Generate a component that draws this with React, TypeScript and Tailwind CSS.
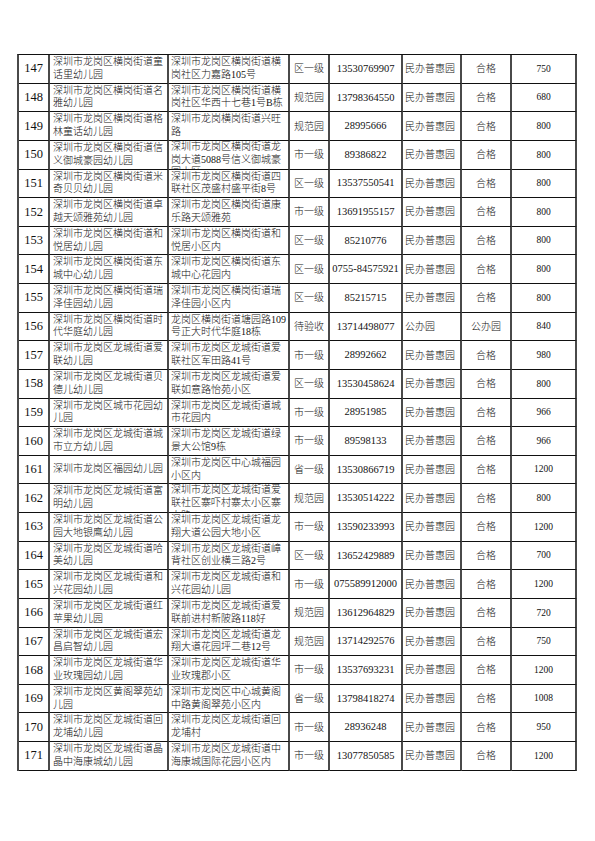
import React from "react";

type Row = {
  no: number;
  name: string;
  address: string;
  level: string;
  phone: string;
  kind: string;
  result: string;
  seats: number;
};

const PUHUI = "民办普惠园";

const rows: Row[] = [
  { no: 147, name: "深圳市龙岗区横岗街道童话里幼儿园", address: "深圳市龙岗区横岗街道横岗社区力嘉路105号", level: "区一级", phone: "13530769907", kind: PUHUI, result: "合格", seats: 750 },
  { no: 148, name: "深圳市龙岗区横岗街道名雅幼儿园", address: "深圳市龙岗区横岗街道横岗社区华西十七巷1号B栋", level: "规范园", phone: "13798364550", kind: PUHUI, result: "合格", seats: 680 },
  { no: 149, name: "深圳市龙岗区横岗街道格林童话幼儿园", address: "深圳市龙岗横岗街道兴旺路", level: "规范园", phone: "28995666", kind: PUHUI, result: "合格", seats: 800 },
  { no: 150, name: "深圳市龙岗区横岗街道信义御城豪园幼儿园", address: "深圳市龙岗区横岗街道龙岗大道5088号信义御城豪园小区", level: "市一级", phone: "89386822", kind: PUHUI, result: "合格", seats: 800 },
  { no: 151, name: "深圳市龙岗区横岗街道米奇贝贝幼儿园", address: "深圳市龙岗区横岗街道四联社区茂盛村盛平街8号", level: "区一级", phone: "13537550541", kind: PUHUI, result: "合格", seats: 800 },
  { no: 152, name: "深圳市龙岗区横岗街道卓越天颂雅苑幼儿园", address: "深圳市龙岗区横岗街道康乐路天颂雅苑", level: "市一级", phone: "13691955157", kind: PUHUI, result: "合格", seats: 800 },
  { no: 153, name: "深圳市龙岗区横岗街道和悦居幼儿园", address: "深圳市龙岗区横岗街道和悦居小区内", level: "区一级", phone: "85210776", kind: PUHUI, result: "合格", seats: 800 },
  { no: 154, name: "深圳市龙岗区横岗街道东城中心幼儿园", address: "深圳市龙岗区横岗街道东城中心花园内", level: "区一级", phone: "0755-84575921", kind: PUHUI, result: "合格", seats: 800 },
  { no: 155, name: "深圳市龙岗区横岗街道瑞泽佳园幼儿园", address: "深圳市龙岗区横岗街道瑞泽佳园小区内", level: "区一级", phone: "85215715", kind: PUHUI, result: "合格", seats: 800 },
  { no: 156, name: "深圳市龙岗区横岗街道时代华庭幼儿园", address: "龙岗区横岗街道塘园路109号正大时代华庭18栋", level: "待验收", phone: "13714498077", kind: "公办园", result: "公办园", seats: 840 },
  { no: 157, name: "深圳市龙岗区龙城街道爱联幼儿园", address: "深圳市龙岗区龙城街道爱联社区军田路41号", level: "市一级", phone: "28992662", kind: PUHUI, result: "合格", seats: 980 },
  { no: 158, name: "深圳市龙岗区龙城街道贝德儿幼儿园", address: "深圳市龙岗区龙城街道爱联如意路怡苑小区", level: "区一级", phone: "13530458624", kind: PUHUI, result: "合格", seats: 800 },
  { no: 159, name: "深圳市龙岗区城市花园幼儿园", address: "深圳市龙岗区龙城街道城市花园内", level: "市一级", phone: "28951985", kind: PUHUI, result: "合格", seats: 966 },
  { no: 160, name: "深圳市龙岗区龙城街道城市立方幼儿园", address: "深圳市龙岗区龙城街道绿景大公馆9栋", level: "市一级", phone: "89598133", kind: PUHUI, result: "合格", seats: 966 },
  { no: 161, name: "深圳市龙岗区福园幼儿园", address: "深圳市龙岗区中心城福园小区内", level: "省一级", phone: "13530866719", kind: PUHUI, result: "合格", seats: 1200 },
  { no: 162, name: "深圳市龙岗区龙城街道富明幼儿园", address: "深圳市龙岗区龙城街道爱联社区寨吓村寨太小区寨太路", level: "规范园", phone: "13530514222", kind: PUHUI, result: "合格", seats: 800 },
  { no: 163, name: "深圳市龙岗区龙城街道公园大地银鹰幼儿园", address: "深圳市龙岗区龙城街道龙翔大道公园大地小区", level: "市一级", phone: "13590233993", kind: PUHUI, result: "合格", seats: 1200 },
  { no: 164, name: "深圳市龙岗区龙城街道哈美幼儿园", address: "深圳市龙岗区龙城街道嶂背社区创业横三路2号", level: "区一级", phone: "13652429889", kind: PUHUI, result: "合格", seats: 700 },
  { no: 165, name: "深圳市龙岗区龙城街道和兴花园幼儿园", address: "深圳市龙岗区龙城街道和兴花园幼儿园", level: "市一级", phone: "075589912000", kind: PUHUI, result: "合格", seats: 1200 },
  { no: 166, name: "深圳市龙岗区龙城街道红苹果幼儿园", address: "深圳市龙岗区龙城街道爱联前进村新陂路118好", level: "规范园", phone: "13612964829", kind: PUHUI, result: "合格", seats: 720 },
  { no: 167, name: "深圳市龙岗区龙城街道宏昌启智幼儿园", address: "深圳市龙岗区龙城街道龙翔大道花园坪二巷12号", level: "规范园", phone: "13714292576", kind: PUHUI, result: "合格", seats: 750 },
  { no: 168, name: "深圳市龙岗区龙城街道华业玫瑰园幼儿园", address: "深圳市龙岗区龙城街道华业玫瑰郡小区", level: "市一级", phone: "13537693231", kind: PUHUI, result: "合格", seats: 1200 },
  { no: 169, name: "深圳市龙岗区黄阁翠苑幼儿园", address: "深圳市龙岗区中心城黄阁中路黄阁翠苑小区内", level: "省一级", phone: "13798418274", kind: PUHUI, result: "合格", seats: 1008 },
  { no: 170, name: "深圳市龙岗区龙城街道回龙埔幼儿园", address: "深圳市龙岗区龙城街道回龙埔村", level: "市一级", phone: "28936248", kind: PUHUI, result: "合格", seats: 950 },
  { no: 171, name: "深圳市龙岗区龙城街道晶晶中海康城幼儿园", address: "深圳市龙岗区龙城街道中海康城国际花园小区内", level: "市一级", phone: "13077850585", kind: PUHUI, result: "合格", seats: 1200 },
];

// shared cell frame: grey vertical rule, black horizontal rule
const cell =
  "box-border flex overflow-hidden border-r-2 border-r-[#4a4a4a] border-b border-b-[#111] [align-items:safe_center]";

const App: React.FC = () => {
  return (
    <div
      className="h-[841px] w-[595px] bg-white pl-[17px] pt-[54px] text-[#111]"
      style={{ fontFamily: '"Liberation Serif", "Noto Sans CJK SC", serif' }}
    >
      <div className="grid w-max grid-cols-[31px_119px_121px_40px_73px_59px_50px_65px] auto-rows-[28.64px] border-t border-t-[#111] border-l-2 border-l-[#4a4a4a] font-light">
        {rows.map((r) => (
          <React.Fragment key={r.no}>
            {/* number */}
            <div className={`${cell} justify-center text-[12.5px]`}>{r.no}</div>

            {/* name */}
            <div className={`${cell} pl-[3px] pr-[2px] text-[10px] leading-[12.7px]`}>
              <span>{r.name}</span>
            </div>

            {/* address */}
            <div className={`${cell} pl-[2px] pr-0 text-[10px] leading-[12.7px]`}>
              <span>{r.address}</span>
            </div>

            {/* level */}
            <div className={`${cell} justify-center whitespace-nowrap text-[10px]`}>{r.level}</div>

            {/* phone */}
            <div className={`${cell} justify-center whitespace-nowrap text-[10.5px]`}>{r.phone}</div>

            {/* type */}
            <div className={`${cell} pl-[2px] whitespace-nowrap text-[10px]`}>{r.kind}</div>

            {/* inspection result */}
            <div className={`${cell} justify-center whitespace-nowrap text-[10px]`}>{r.result}</div>

            {/* capacity */}
            <div className={`${cell} justify-center text-[9.5px]`}>{r.seats}</div>
          </React.Fragment>
        ))}
      </div>
    </div>
  );
};

export default App;
